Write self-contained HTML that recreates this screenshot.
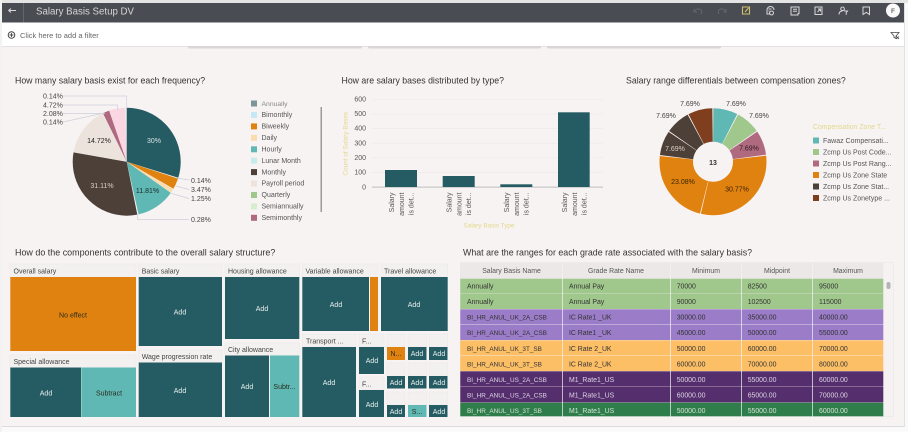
<!DOCTYPE html>
<html><head><meta charset="utf-8"><style>
html,body{margin:0;padding:0;background:#fff;width:908px;height:432px;overflow:hidden}
svg{display:block;filter:blur(.35px)}
text{font-family:"Liberation Sans",sans-serif;font-size:7px;fill:#333}
.t{font-size:8.75px;fill:#333}
.l{font-size:7px;fill:#555}
.p{font-size:7px;fill:#444}
.h{font-size:7px;fill:#444}
.w{fill:#e6eeee;font-size:7px;text-anchor:middle}
.d{fill:#2c2c20;font-size:7px;text-anchor:middle}
.th{font-size:6.9px;fill:#555;text-anchor:middle}
.c{font-size:6.9px;fill:#333}
.cw{font-size:6.9px;fill:#ddd6e4}
.n{font-size:6.4px}
.ax{font-size:7px;fill:#555;text-anchor:end}
.yl{font-size:6.4px;fill:#e0d88a}
.ln{stroke:#ccd0dc;stroke-width:.7;fill:none}
.ic{fill:none;stroke:#d8d8da;stroke-width:1}
</style></head><body>
<svg width="908" height="432" viewBox="0 0 908 432" xmlns="http://www.w3.org/2000/svg">
<rect width="908" height="432" fill="#fbfafa"/>
<rect x="0" y="0" width="908" height="3" fill="#e4e4e4"/>
<rect x="0" y="0" width="2" height="432" fill="#f2f2f2"/>
<rect x="2" y="46" width="902" height="380" fill="#f8f3f3"/>
<rect x="2" y="426" width="902" height="1" fill="#dcdcdc"/>
<rect x="904" y="3" width="1" height="424" fill="#e2e2e2"/>
<!-- header -->
<rect x="2" y="3" width="902" height="19.500" fill="#4a4c53"/>
<rect x="23" y="3" width="1" height="19.500" fill="#63656b"/>
<path d="M8.500 10.500h7.500M8.500 10.500l2.500-2M8.500 10.500l2.500 2" class="ic"/>
<text x="36" y="14.500" style="font-size:9.700px;fill:#d6d6d8">Salary Basis Setup DV</text>
<!-- top icons -->
<path d="M694 12c1-3 5-4 7-2 1 1 1 3 0 4M694 9v3h3" fill="none" stroke="#64666c" stroke-width="1"/>
<path d="M726 12c-1-3-5-4-7-2-1 1-1 3 0 4M726 9v3h-3" fill="none" stroke="#64666c" stroke-width="1"/>
<path d="M743 7h6.500v7h-7v-7zM745 12l3.500-4" fill="none" stroke="#cfc06a" stroke-width="1.100"/>
<path d="M767 10a3.500 3.500 0 1 1 7 0M767 10v4h3M771.500 11a2 2 0 1 0 .1 0M768.500 9h3M768.500 11h1" class="ic"/>
<path d="M791 7h8v6.500h-1v1.500h-7zM793 9.200h4M793 11.200h4" class="ic"/>
<path d="M815 7h7v7.500h-7zM817.500 12l3-3M818 9h2.500v2.500" class="ic"/>
<path d="M842.500 7a1.800 1.800 0 1 0 .1 0M839 14.500c0-2.500 1.500-3.500 3.500-3.500M844 11h3.500l-1.300 1.700v2" class="ic"/>
<path d="M863 7h6.500v7.500l-3.200-2.200-3.300 2.200z" class="ic"/>
<circle cx="893" cy="10.500" r="7" fill="#fafafa"/>
<text x="893" y="13" style="font-size:6.500px;fill:#666;text-anchor:middle;font-weight:bold">F</text>
<!-- filter bar -->
<rect x="2" y="22.500" width="902" height="23.500" fill="#fff"/>
<rect x="2" y="46" width="902" height=".8" fill="#dedcdc"/>
<circle cx="11.500" cy="35" r="3.300" fill="none" stroke="#444" stroke-width="1"/>
<path d="M9.500 35h4M11.500 33v4" stroke="#444" stroke-width=".9"/>
<text x="20" y="38" style="font-size:7.500px;fill:#666">Click here to add a filter</text>
<path d="M891 32.500h8l-3 3.500v2.500l-2-1v-1.500zM896 36l3 3M899 36.500l-3 2.500" fill="none" stroke="#444" stroke-width=".8"/>
<g fill="#dad6d6">
<rect x="188" y="46" width="174" height="2.500" rx="1.200"/>
<rect x="368" y="46" width="173" height="2.500" rx="1.200"/>
<rect x="547" y="46" width="174" height="2.500" rx="1.200"/>
</g>
<!-- titles -->
<text class="t" x="15" y="83.500">How many salary basis exist for each frequency?</text>
<text class="t" x="341.500" y="83.500">How are salary bases distributed by type?</text>
<text class="t" x="626" y="83.500">Salary range differentials between compensation zones?</text>
<text class="t" x="15" y="255.500" style="font-size:8.95px">How do the components contribute to the overall salary structure?</text>
<text class="t" x="463" y="255.500" style="font-size:8.85px">What are the ranges for each grade rate associated with the salary basis?</text>
<!-- pie 1 -->
<g transform="translate(126.700 161.700) rotate(-90)" fill="none" stroke-width="54">
<circle r="27" pathLength="100" stroke="#255c63" stroke-dasharray="29.900 100" stroke-dashoffset="0"/>
<circle r="27" pathLength="100" stroke="#e0820f" stroke-dasharray="3.300 100" stroke-dashoffset="-30.140"/>
<circle r="27" pathLength="100" stroke="#fbdcae" stroke-dasharray="1.150 100" stroke-dashoffset="-33.610"/>
<circle r="27" pathLength="100" stroke="#5fb8b3" stroke-dasharray="11.700 100" stroke-dashoffset="-34.860"/>
<circle r="27" pathLength="100" stroke="#4c4038" stroke-dasharray="31 100" stroke-dashoffset="-46.950"/>
<circle r="27" pathLength="100" stroke="#ece3dc" stroke-dasharray="14.620 100" stroke-dashoffset="-78.060"/>
<circle r="27" pathLength="100" stroke="#b06a80" stroke-dasharray="2 100" stroke-dashoffset="-92.920"/>
<circle r="27" pathLength="100" stroke="#f9d6e2" stroke-dasharray="4.800 100" stroke-dashoffset="-95"/>
</g>
<text x="154" y="143" style="font-size:7px;fill:#d5e2e3;text-anchor:middle">30%</text>
<text x="147.500" y="193" style="font-size:7px;fill:#1c2a2a;text-anchor:middle">11.81%</text>
<text x="102" y="188" style="font-size:7px;fill:#d8d0ca;text-anchor:middle">31.11%</text>
<text x="99" y="143" style="font-size:7px;fill:#222;text-anchor:middle">14.72%</text>
<g class="p">
<text class="p" x="43" y="98.500">0.14%</text>
<text class="p" x="43" y="107.500">4.72%</text>
<text class="p" x="43" y="116">2.08%</text>
<text class="p" x="43" y="124.500">0.14%</text>
<text class="p" x="191" y="183">0.14%</text>
<text class="p" x="191" y="192">3.47%</text>
<text class="p" x="191" y="201">1.25%</text>
<text class="p" x="191" y="222">0.28%</text>
</g>
<path class="ln" d="M63 96h63.700v12M63 105h54.700v5M63 113.500h42M63 122l41-9M176.700 178l12.500 2M176 186l13 3.500M170 193l19 5.500M137.500 214v5.500h51.500"/>
<!-- legend 1 -->
<g>
<rect x="251" y="100.500" width="6" height="6" fill="#7d9498"/><text x="261.500" y="105.800" style="font-size:6.800px;fill:#888">Annually</text>
<rect x="251" y="112" width="6" height="6" fill="#c6e8f4"/><text class="l" x="261.500" y="117.200">Bimonthly</text>
<rect x="251" y="123.400" width="6" height="6" fill="#e0820f"/><text class="l" x="261.500" y="128.600">Biweekly</text>
<rect x="251" y="134.800" width="6" height="6" fill="#fbdcae"/><text class="l" x="261.500" y="140">Daily</text>
<rect x="251" y="146.300" width="6" height="6" fill="#5fb8b3"/><text class="l" x="261.500" y="151.500">Hourly</text>
<rect x="251" y="157.700" width="6" height="6" fill="#c8ecec"/><text class="l" x="261.500" y="162.900">Lunar Month</text>
<rect x="251" y="169.100" width="6" height="6" fill="#4c4038"/><text class="l" x="261.500" y="174.300">Monthly</text>
<rect x="251" y="180.500" width="6" height="6" fill="#ece3dc"/><text class="l" x="261.500" y="185.700">Payroll period</text>
<rect x="251" y="192" width="6" height="6" fill="#a0c88c"/><text class="l" x="261.500" y="197.200">Quarterly</text>
<rect x="251" y="203.400" width="6" height="6" fill="#d8ecd0"/><text class="l" x="261.500" y="208.600">Semiannually</text>
<rect x="251" y="214.800" width="6" height="6" fill="#b06a80"/><text class="l" x="261.500" y="220">Semimonthly</text>
</g>
<rect x="320.500" y="107" width="1.500" height="105" fill="#9a9a9a"/>
<!-- bars -->
<g stroke="#eeeaea" stroke-width=".7">
<path d="M372 99.300h231M372 114h231M372 128.500h231M372 143.200h231M372 157.800h231M372 172.500h231"/>
</g>
<rect x="372" y="186.700" width="231" height=".8" fill="#aeb0b2"/>
<g fill="#255c63">
<rect x="385" y="170" width="32" height="17"/>
<rect x="442.700" y="176" width="32" height="11"/>
<rect x="500.300" y="184.300" width="32" height="2.700"/>
<rect x="558" y="112.300" width="31.700" height="74.700"/>
</g>
<g>
<text class="ax" x="366" y="101.500">600</text>
<text class="ax" x="366" y="116">500</text>
<text class="ax" x="366" y="130.700">400</text>
<text class="ax" x="366" y="145.300">300</text>
<text class="ax" x="366" y="160">200</text>
<text class="ax" x="366" y="174.600">100</text>
<text class="ax" x="366" y="189.300">0</text>
</g>
<text class="yl" transform="translate(347.500 175.500) rotate(-90)">Count of Salary Bases</text>
<text class="yl" x="463.500" y="227.500">Salary Basis Type</text>
<g style="text-anchor:end">
<g transform="translate(394 192.500) rotate(-90)"><text class="ax" x="0" y="0">Salary</text><text class="ax" x="0" y="10">amount</text><text class="ax" x="0" y="19.500">is det...</text></g>
<g transform="translate(451.500 192.500) rotate(-90)"><text class="ax" x="0" y="0">Salary</text><text class="ax" x="0" y="10">amount</text><text class="ax" x="0" y="19.500">is det...</text></g>
<g transform="translate(509 192.500) rotate(-90)"><text class="ax" x="0" y="0">Salary</text><text class="ax" x="0" y="10">amount</text><text class="ax" x="0" y="19.500">is det...</text></g>
<g transform="translate(567 192.500) rotate(-90)"><text class="ax" x="0" y="0">Salary</text><text class="ax" x="0" y="10">amount</text><text class="ax" x="0" y="19.500">is det...</text></g>
</g>
<!-- donut -->
<g transform="translate(713 161.700) rotate(-90)" fill="none" stroke-width="33.500">
<circle r="36.750" pathLength="100" stroke="#5fb8b3" stroke-dasharray="7.400 100" stroke-dashoffset="-.1"/>
<circle r="36.750" pathLength="100" stroke="#a0c88c" stroke-dasharray="7.400 100" stroke-dashoffset="-7.790"/>
<circle r="36.750" pathLength="100" stroke="#b06a80" stroke-dasharray="7.400 100" stroke-dashoffset="-15.480"/>
<circle r="36.750" pathLength="100" stroke="#e0820f" stroke-dasharray="30.500 100" stroke-dashoffset="-23.170"/>
<circle r="36.750" pathLength="100" stroke="#e0820f" stroke-dasharray="22.800 100" stroke-dashoffset="-53.940"/>
<circle r="36.750" pathLength="100" stroke="#4c4038" stroke-dasharray="7.400 100" stroke-dashoffset="-77.020"/>
<circle r="36.750" pathLength="100" stroke="#4c4038" stroke-dasharray="7.400 100" stroke-dashoffset="-84.710"/>
<circle r="36.750" pathLength="100" stroke="#7f3f1e" stroke-dasharray="7.400 100" stroke-dashoffset="-92.400"/>
</g>
<text x="713" y="165" style="font-size:7px;font-weight:bold;fill:#333;text-anchor:middle">13</text>
<g style="text-anchor:middle">
<text x="690" y="106" style="font-size:7px;fill:#444;text-anchor:middle">7.69%</text>
<text x="736" y="106" style="font-size:7px;fill:#444;text-anchor:middle">7.69%</text>
<text x="759" y="118" style="font-size:7px;fill:#444;text-anchor:middle">7.69%</text>
<text x="666" y="118" style="font-size:7px;fill:#444;text-anchor:middle">7.69%</text>
<text x="675" y="151" style="font-size:7px;fill:#d8d0ca;text-anchor:middle">7.69%</text>
<text x="749" y="150.500" style="font-size:7px;fill:#2a1a20;text-anchor:middle">7.69%</text>
<text x="683" y="184" style="font-size:7px;fill:#3a2408;text-anchor:middle">23.08%</text>
<text x="737" y="191.500" style="font-size:7px;fill:#3a2408;text-anchor:middle">30.77%</text>
</g>
<text x="813" y="129" style="font-size:6.900px;fill:#e0d88a">Compensation Zone T...</text>
<g>
<rect x="813" y="137.500" width="6" height="6" fill="#5fb8b3"/><text class="l" x="823" y="143">Fawaz Compensati...</text>
<rect x="813" y="149" width="6" height="6" fill="#a0c88c"/><text class="l" x="823" y="154.500">Zcmp Us Post Code...</text>
<rect x="813" y="160.500" width="6" height="6" fill="#b06a80"/><text class="l" x="823" y="166">Zcmp Us Post Rang...</text>
<rect x="813" y="172" width="6" height="6" fill="#e0820f"/><text class="l" x="823" y="177.500">Zcmp Us Zone State</text>
<rect x="813" y="183.500" width="6" height="6" fill="#4c4038"/><text class="l" x="823" y="189">Zcmp Us Zone Stat...</text>
<rect x="813" y="195" width="6" height="6" fill="#7f3f1e"/><text class="l" x="823" y="200.500">Zcmp Us Zonetype ...</text>
</g>
<!-- treemap headers -->
<g fill="#f3f1f0" stroke="#e8e6e6" stroke-width=".5">
<rect x="10" y="264" width="126" height="13"/>
<rect x="10" y="355" width="126" height="13"/>
<rect x="138.700" y="264" width="83.300" height="13"/>
<rect x="138.700" y="350" width="83.300" height="13"/>
<rect x="225" y="264" width="74.300" height="13"/>
<rect x="225" y="343" width="74.300" height="12.500"/>
<rect x="302.300" y="264" width="75.700" height="13"/>
<rect x="381" y="264" width="66.700" height="13"/>
<rect x="302.300" y="334" width="53.500" height="13"/>
<rect x="359" y="334" width="25" height="13"/>
<rect x="359" y="377" width="25" height="13"/>
<rect x="387" y="334" width="18" height="13"/><rect x="408" y="334" width="18.500" height="13"/><rect x="429" y="334" width="18.500" height="13"/>
<rect x="387" y="363" width="18" height="13"/><rect x="408" y="363" width="18.500" height="13"/><rect x="429" y="363" width="18.500" height="13"/>
<rect x="387" y="392" width="18" height="13"/><rect x="408" y="392" width="18.500" height="13"/><rect x="429" y="392" width="18.500" height="13"/>
</g>
<!-- treemap tiles -->
<rect x="10.300" y="277" width="125.700" height="74" fill="#e0820f"/>
<g fill="#255c63">
<rect x="10.300" y="367.500" width="70.700" height="49.500"/>
<rect x="138.700" y="277" width="83.300" height="69"/>
<rect x="138.700" y="362.500" width="83.300" height="54.500"/>
<rect x="225" y="277" width="74.300" height="62"/>
<rect x="225" y="355.500" width="44" height="61.500"/>
<rect x="302.300" y="277" width="66.700" height="54"/>
<rect x="381" y="277" width="66.700" height="54"/>
<rect x="302.300" y="347" width="53.700" height="70"/>
<rect x="359" y="347" width="25" height="27"/>
<rect x="359" y="390" width="25" height="27"/>
<rect x="408" y="347" width="18.500" height="13"/><rect x="429" y="347" width="18.500" height="13"/>
<rect x="387" y="376" width="18" height="12.500"/><rect x="408" y="376" width="18.500" height="12.500"/><rect x="429" y="376" width="18.500" height="12.500"/>
<rect x="387" y="405" width="18" height="12"/><rect x="429" y="405" width="18.500" height="12"/>
</g>
<rect x="81.300" y="367.500" width="54.700" height="49.500" fill="#5fb8b3"/>
<rect x="270" y="355.500" width="29.300" height="61.500" fill="#5fb8b3"/>
<rect x="370" y="277" width="8" height="54" fill="#e0820f"/>
<rect x="387" y="347" width="18" height="13" fill="#e0820f"/>
<rect x="408" y="405" width="18.500" height="12" fill="#5fb8b3"/>
<g>
<text class="h" x="13.500" y="273.500">Overall salary</text>
<text class="h" x="13.500" y="364">Special allowance</text>
<text class="h" x="141.700" y="273.500">Basic salary</text>
<text class="h" x="141.700" y="359">Wage progression rate</text>
<text class="h" x="228" y="273.500">Housing allowance</text>
<text class="h" x="228" y="352.200">City allowance</text>
<text class="h" x="305.500" y="273.500">Variable allowance</text>
<text class="h" x="384" y="273.500">Travel allowance</text>
<text class="h" x="306" y="343.500">Transport ...</text>
<text class="h" x="362" y="343.500">F...</text>
<text class="h" x="362" y="386.500">F...</text>
</g>
<text class="d" x="73" y="317.500">No effect</text>
<text class="w" x="46" y="395.500">Add</text>
<text class="d" x="109" y="395.500">Subtract</text>
<text class="w" x="180" y="314.500">Add</text>
<text class="w" x="180" y="393">Add</text>
<text class="w" x="262" y="311">Add</text>
<text class="w" x="247" y="389">Add</text>
<text class="d" x="284.500" y="389">Subtr...</text>
<text class="w" x="336" y="307">Add</text>
<text class="w" x="414" y="307">Add</text>
<text class="w" x="329" y="385">Add</text>
<text class="w" x="372" y="363">Add</text>
<text class="w" x="372" y="407">Add</text>
<text class="d" x="396" y="356">N...</text>
<text class="w" x="417" y="356">Add</text><text class="w" x="439" y="356">Add</text>
<text class="w" x="396" y="385">Add</text><text class="w" x="417" y="385">Add</text><text class="w" x="439" y="385">Add</text>
<text class="w" x="396" y="414">Add</text><text class="d" x="417" y="414">S...</text><text class="w" x="439" y="414">Add</text>
<!-- table -->
<rect x="460.300" y="262.500" width="433.200" height="154" fill="#f6f2f2" stroke="#e6e4e4" stroke-width=".5"/>
<rect x="460.300" y="262.500" width="423" height="16" fill="#ece8e8"/>
<rect x="460.300" y="278.700" width="423" height="15" fill="#a0c88c"/>
<rect x="460.300" y="294" width="423" height="15" fill="#a0c88c"/>
<rect x="460.300" y="309.300" width="423" height="15" fill="#9b7cc8"/>
<rect x="460.300" y="324.700" width="423" height="15.300" fill="#9b7cc8"/>
<rect x="460.300" y="340.300" width="423" height="15" fill="#fcbf66"/>
<rect x="460.300" y="355.700" width="423" height="15.300" fill="#fcbf66"/>
<rect x="460.300" y="371.300" width="423" height="15.400" fill="#552e6d"/>
<rect x="460.300" y="387" width="423" height="15.400" fill="#552e6d"/>
<rect x="460.300" y="402.700" width="423" height="13.600" fill="#2f7d4a"/>
<g fill="#f4f2f2">
<rect x="562" y="262.500" width=".7" height="154"/>
<rect x="670" y="262.500" width=".7" height="154"/>
<rect x="741" y="262.500" width=".7" height="154"/>
<rect x="812" y="262.500" width=".7" height="154"/>
</g>
<rect x="886.500" y="282" width="4" height="7" rx="2" fill="#b4b4b4"/>
<text class="th" x="511.500" y="273">Salary Basis Name</text>
<text class="th" x="616" y="273">Grade Rate Name</text>
<text class="th" x="706" y="273">Minimum</text>
<text class="th" x="777" y="273">Midpoint</text>
<text class="th" x="848" y="273">Maximum</text>
<g>
<text class="c" x="467" y="288.500">Annually</text><text class="c" x="569" y="288.500">Annual Pay</text><text class="c" x="676.700" y="288.500">70000</text><text class="c" x="747.700" y="288.500">82500</text><text class="c" x="819" y="288.500">95000</text>
<text class="c" x="467" y="304">Annually</text><text class="c" x="569" y="304">Annual Pay</text><text class="c" x="676.700" y="304">90000</text><text class="c" x="747.700" y="304">102500</text><text class="c" x="819" y="304">115000</text>
<text class="c n" x="467" y="319.500">BI_HR_ANUL_UK_2A_CSB</text><text class="c" x="569" y="319.500">IC Rate1 _UK</text><text class="c" x="676.700" y="319.500">30000.00</text><text class="c" x="747.700" y="319.500">35000.00</text><text class="c" x="819" y="319.500">40000.00</text>
<text class="c n" x="467" y="335">BI_HR_ANUL_UK_2A_CSB</text><text class="c" x="569" y="335">IC Rate1 _UK</text><text class="c" x="676.700" y="335">45000.00</text><text class="c" x="747.700" y="335">50000.00</text><text class="c" x="819" y="335">55000.00</text>
<text class="c n" x="467" y="351">BI_HR_ANUL_UK_3T_SB</text><text class="c" x="569" y="351">IC Rate 2_UK</text><text class="c" x="676.700" y="351">50000.00</text><text class="c" x="747.700" y="351">60000.00</text><text class="c" x="819" y="351">70000.00</text>
<text class="c n" x="467" y="366.500">BI_HR_ANUL_UK_3T_SB</text><text class="c" x="569" y="366.500">IC Rate 2_UK</text><text class="c" x="676.700" y="366.500">60000.00</text><text class="c" x="747.700" y="366.500">70000.00</text><text class="c" x="819" y="366.500">80000.00</text>
<text class="cw n" x="467" y="382">BI_HR_ANUL_US_2A_CSB</text><text class="cw" x="569" y="382">M1_Rate1_US</text><text class="cw" x="676.700" y="382">50000.00</text><text class="cw" x="747.700" y="382">55000.00</text><text class="cw" x="819" y="382">60000.00</text>
<text class="cw n" x="467" y="397.500">BI_HR_ANUL_US_2A_CSB</text><text class="cw" x="569" y="397.500">M1_Rate1_US</text><text class="cw" x="676.700" y="397.500">60000.00</text><text class="cw" x="747.700" y="397.500">65000.00</text><text class="cw" x="819" y="397.500">70000.00</text>
<text class="cw n" x="467" y="413" style="fill:#d4e4d8">BI_HR_ANUL_US_3T_SB</text><text class="cw" x="569" y="413" style="fill:#d4e4d8">M1_Rate1_US</text><text class="cw" x="676.700" y="413" style="fill:#d4e4d8">50000.00</text><text class="cw" x="747.700" y="413" style="fill:#d4e4d8">55000.00</text><text class="cw" x="819" y="413" style="fill:#d4e4d8">60000.00</text>
</g>
</svg>
</body></html>
